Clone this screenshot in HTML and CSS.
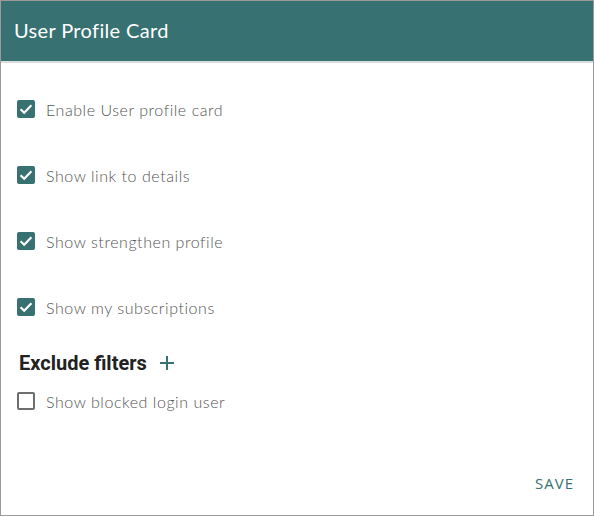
FILE: index.html
```html
<!DOCTYPE html>
<html>
<head>
<meta charset="utf-8">
<link rel="stylesheet" href="styles.css">
</head>
<body>
<div class="card">
  <div class="header">User Profile Card</div>
  <div class="content">
    <label class="row checked"><span class="box"><svg viewBox="0 0 18 18" width="18" height="18"><path d="M3.6 9.2 L7.2 12.7 L14.4 5.2" fill="none" stroke="#fff" stroke-width="2.2"/></svg></span><span class="text">Enable User profile card</span></label>
    <label class="row checked"><span class="box"><svg viewBox="0 0 18 18" width="18" height="18"><path d="M3.6 9.2 L7.2 12.7 L14.4 5.2" fill="none" stroke="#fff" stroke-width="2.2"/></svg></span><span class="text">Show link to details</span></label>
    <label class="row checked"><span class="box"><svg viewBox="0 0 18 18" width="18" height="18"><path d="M3.6 9.2 L7.2 12.7 L14.4 5.2" fill="none" stroke="#fff" stroke-width="2.2"/></svg></span><span class="text">Show strengthen profile</span></label>
    <label class="row checked"><span class="box"><svg viewBox="0 0 18 18" width="18" height="18"><path d="M3.6 9.2 L7.2 12.7 L14.4 5.2" fill="none" stroke="#fff" stroke-width="2.2"/></svg></span><span class="text">Show my subscriptions</span></label>
    <div class="section">
      <span class="section-title">Exclude filters</span>
      <svg class="plus" viewBox="0 0 14 14" width="14" height="14"><path d="M7 0 V14 M0 7 H14" stroke="#377171" stroke-width="2"/></svg>
    </div>
    <label class="row unchecked"><span class="box"></span><span class="text">Show blocked login user</span></label>
  </div>
  <div class="footer"><button class="save">SAVE</button></div>
</div>
</body>
</html>
```
FILE: styles.css
```css
html, body { margin: 0; padding: 0; }
body { width: 594px; height: 516px; background: #fff; }
.card {
  box-sizing: border-box;
  width: 594px;
  height: 516px;
  border: 1px solid #9a9a9a;
  display: flex;
  flex-direction: column;
  font-family: "Lato", "Open Sans", sans-serif;
}
.header {
  box-sizing: border-box;
  height: 62px;
  background: #377171;
  color: #fff;
  font-size: 20px;
  padding: 0 0 3px 13px;
  display: flex;
  align-items: center;
  border-bottom: 2px solid #d9dede;
  letter-spacing: 0.35px;
}
.content {
  flex: 1;
  padding: 36px 0 0 16px;
  display: flex;
  flex-direction: column;
}
.row {
  display: flex;
  align-items: center;
  height: 20px;
  margin-bottom: 46px;
}
.box {
  box-sizing: border-box;
  width: 18px;
  height: 18px;
  border-radius: 2px;
  margin-right: 11px;
  display: flex;
}
.checked .box { background: #377171; }
.unchecked .box { border: 2px solid #6e6e6e; }
.text {
  font-size: 16px;
  font-weight: 300;
  color: #555;
  letter-spacing: 0.55px;
}
.section {
  display: flex;
  align-items: center;
  margin-top: -12px;
  height: 24px;
  margin-bottom: 16px;
}
.section-title {
  font-family: "Roboto", sans-serif;
  font-weight: 700;
  font-size: 20px;
  color: #222;
  margin-left: 2px;
}
.plus { margin-left: 13px; }
.unchecked { margin-bottom: 0; }
.footer {
  display: flex;
  justify-content: flex-end;
  padding: 0 19px 22px 0;
}
.save {
  background: none;
  border: none;
  padding: 0;
  font-family: "Open Sans", sans-serif;
  font-size: 15px;
  letter-spacing: 1px;
  color: #377171;
}
```
